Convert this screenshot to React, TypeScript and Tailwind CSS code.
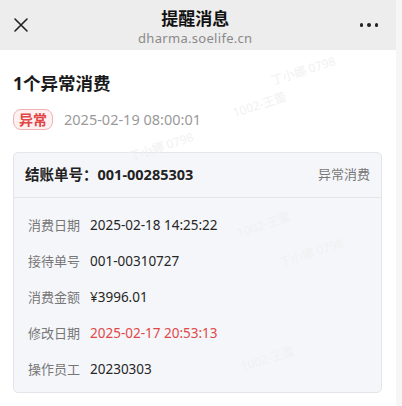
import React from 'react';

const rows: { label: string; value: string; red?: boolean }[] = [
  { label: '消费日期', value: '2025-02-18 14:25:22' },
  { label: '接待单号', value: '001-00310727' },
  { label: '消费金额', value: '¥3996.01' },
  { label: '修改日期', value: '2025-02-17 20:53:13', red: true },
  { label: '操作员工', value: '20230303' },
];

// faint watermark text laid over the page
const marks: { x: number; y: number; text: string }[] = [
  { x: 270, y: 62, text: '丁小娜 0798' },
  { x: 232, y: 96, text: '1002-王蕾' },
  { x: 128, y: 138, text: '丁小娜 0798' },
  { x: 236, y: 216, text: '1002-王蕾' },
  { x: 278, y: 244, text: '丁小娜 0798' },
  { x: 240, y: 350, text: '1002-王蕾' },
];

export default function App() {
  return (
    <div
      className="relative w-[402px] h-[406px] overflow-hidden bg-[#f6f6f6] flex"
      style={{ fontFamily: '"Noto Sans", "Noto Sans CJK SC", sans-serif' }}
    >
      <div className="w-[396px] bg-white flex flex-col">
        {/* nav bar */}
        <div className="h-[50px] bg-[#ededed] flex items-center px-[12px] shrink-0">
          <svg width="20" height="20" viewBox="0 0 20 20" className="ml-[-1px]">
            <path d="M4 4L16 16M16 4L4 16" stroke="#222" strokeWidth="1.6" strokeLinecap="round" />
          </svg>
          <div className="flex-1 flex flex-col items-center mt-[4px]">
            <div className="text-[17px] leading-[22px] font-semibold text-[#111]">提醒消息</div>
            <div className="text-[13px] leading-[16px] text-[#8a8a8a] tracking-[0.3px]">dharma.soelife.cn</div>
          </div>
          <div className="flex gap-[4px] mr-[6px]">
            <span className="w-[3.5px] h-[3.5px] rounded-full bg-[#222]" />
            <span className="w-[3.5px] h-[3.5px] rounded-full bg-[#222]" />
            <span className="w-[3.5px] h-[3.5px] rounded-full bg-[#222]" />
          </div>
        </div>

        {/* content */}
        <div className="px-[13px] pt-[20px]">
          <div className="text-[17.5px] leading-[26px] font-bold text-[#1a1a1a]">1个异常消费</div>
          <div className="flex items-center mt-[13px]">
            <span className="px-[5px] h-[21px] flex items-center rounded-[8px] border border-[#f0b4b4] bg-[#fdf0f0] text-[14px] font-bold text-[#e34545] leading-none">
              异常
            </span>
            <span className="ml-[11px] text-[14.5px] text-[#9a9a9a]">2025-02-19 08:00:01</span>
          </div>

          <div className="mt-[21px] w-[369px] rounded-[5px] border border-[#e3e5ea] bg-[#f5f6fa]">
            <div className="h-[45px] flex items-center justify-between px-[11px] border-b border-[#e3e5ea]">
              <span className="text-[14.5px] font-bold text-[#222]">结账单号：001-00285303</span>
              <span className="text-[13px] text-[#777]">异常消费</span>
            </div>
            <div className="flex flex-col gap-[17px] px-[14px] pt-[18px] pb-[13px]">
              {rows.map((r) => (
                <div key={r.label} className="flex items-center h-[19px] text-[13px]">
                  <span className="w-[62px] text-[#777]">{r.label}</span>
                  <span className={r.red ? 'text-[13.5px] text-[#e04848]' : 'text-[13.5px] text-[#262626]'}>{r.value}</span>
                </div>
              ))}
            </div>
          </div>
        </div>
      </div>

      {/* watermark overlay */}
      {marks.map((m, i) => (
        <span
          key={i}
          className="absolute pointer-events-none text-[12px] text-[#f1f1f1] whitespace-nowrap -rotate-[18deg]"
          style={{ left: m.x, top: m.y }}
        >
          {m.text}
        </span>
      ))}
    </div>
  );
}
